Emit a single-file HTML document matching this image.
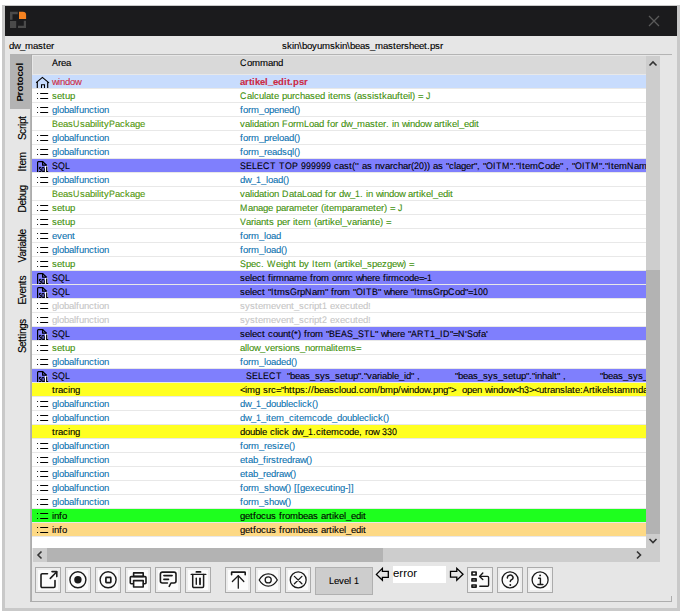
<!DOCTYPE html>
<html><head><meta charset="utf-8">
<style>
html,body{margin:0;padding:0;}
body{width:683px;height:614px;background:#fff;position:relative;overflow:hidden;font-family:"Liberation Sans",sans-serif;font-size:9.6px;}
div,svg{position:absolute;}
.frame{left:2px;top:5px;width:678px;height:606px;background:#c9c9c9;}
.hdr{left:5px;top:6px;width:672px;height:30px;background:#1b1b1d;}
.bd{left:5px;top:36px;width:672px;height:572px;background:#e6e6e6;}
.ttl{top:40px;white-space:nowrap;color:#000;line-height:12px;-webkit-text-stroke:0.12px #000;}
.tabbg{left:10px;top:54px;width:22px;height:55px;background:#b3b3b3;}
.vline{left:30px;top:54px;width:2px;height:548px;background:#b4b4b4;}
.vline2{left:31px;top:54px;width:1px;height:548px;background:#acacac;}
.hline{left:10px;top:54px;width:662px;height:1px;background:#b4b4b4;}
.bline{left:30px;top:601px;width:642px;height:1px;background:#adadad;}
.rtick{left:671px;top:596px;width:1px;height:6px;background:#adadad;}
.tbl{left:32px;top:55px;width:614px;height:493px;background:#fff;overflow:hidden;}
.thl{left:32px;top:55px;width:614px;height:20px;background:#e8e8e8;}
.th{left:33px;top:56px;width:613px;height:18px;background:#d9d9d9;}
.thx{top:57px;color:#000;white-space:nowrap;line-height:11px;-webkit-text-stroke:0.12px #000;}
.rows{left:0;top:0;width:646px;height:548px;overflow:hidden;}
.rbg{left:32px;width:614px;height:13px;}
.rsep{left:32px;width:614px;height:1px;background:#e8e8e8;}
.tx{white-space:nowrap;line-height:13px;height:13px;font-size:9.5px;-webkit-text-stroke:0.1px currentColor;}
i{display:inline-block;font-style:normal;}
.tx i.u,.thx i.u,.lvl i.u{text-rendering:geometricPrecision;transform:scaleX(0.93);transform-origin:0 0;}
.ic{left:33px;}
.vs{left:646px;top:56px;width:14px;height:492px;background:#cdcdcd;}
.vthumb{left:646px;top:270px;width:14px;height:264px;background:#b3b3b3;}
.hs{left:33px;top:548px;width:627px;height:14px;background:#cdcdcd;}
.hthumb{left:47px;top:548px;width:336px;height:14px;background:#b3b3b3;}
.tab{left:19px;width:0;height:0;}
.tabt{left:0;top:0;white-space:nowrap;line-height:11px;transform:translate(-50%,-50%) rotate(-90deg);color:#000;font-size:10.2px;-webkit-text-stroke:0.15px #000;}
.btn{border:1px solid #ababab;background:#fcfcfc;box-shadow:inset 0 0 0 2px #ededed;}
.btn svg{left:0;top:0;}
.lvl{left:315px;top:567px;width:56px;height:26px;border:1px solid #b0b0b0;background:#cdcdcd;text-align:center;line-height:26px;color:#000;-webkit-text-stroke:0.12px #000;}
.inp{left:393px;top:566px;width:53px;height:17px;background:#fff;}
.err{left:393px;top:566px;font-size:11.4px;line-height:14px;color:#000;}
</style></head><body>
<div class="frame"></div>
<div class="hdr"></div>
<div class="bd"></div>
<svg style="left:9px;top:11px" width="18" height="18" viewBox="0 0 18 18">
<path d="M1 0.8H8.8V3.3H3.5V8.8H1Z" fill="#4a4a4a"/>
<path d="M10 0.8H13.8Q17.1 0.8 17.1 4.1V7.9H10Z" fill="#f58220"/>
<rect x="1" y="10" width="6.2" height="7" fill="#4a4a4a"/>
<path d="M14.8 9.8H17V17H9V14.8H14.8Z" fill="#4a4a4a"/>
</svg>
<svg style="left:647px;top:14px" width="14" height="14" viewBox="0 0 14 14"><path d="M2 2L12 12M12 2L2 12" stroke="#5a5a5a" stroke-width="1.3"/></svg>
<div class="ttl" style="left:9px"><i style="width:5px">d</i><i style="width:6px">w</i><i style="width:5px">_</i><i style="width:8px">m</i><i style="width:5px">a</i><i style="width:5px">s</i><i style="width:3px">t</i><i style="width:5px">e</i><i style="width:3px">r</i></div>
<div class="ttl" style="left:282px"><i style="width:5px">s</i><i style="width:5px">k</i><i style="width:2px">i</i><i style="width:5px">n</i><i style="width:3px">\</i><i style="width:5px">b</i><i style="width:5px">o</i><i style="width:5px">y</i><i style="width:5px">u</i><i style="width:8px">m</i><i style="width:5px">s</i><i style="width:5px">k</i><i style="width:2px">i</i><i style="width:5px">n</i><i style="width:3px">\</i><i style="width:5px">b</i><i style="width:5px">e</i><i style="width:5px">a</i><i style="width:5px">s</i><i style="width:5px">_</i><i style="width:8px">m</i><i style="width:5px">a</i><i style="width:5px">s</i><i style="width:3px">t</i><i style="width:5px">e</i><i style="width:3px">r</i><i style="width:5px">s</i><i style="width:5px">h</i><i style="width:5px">e</i><i style="width:5px">e</i><i style="width:3px">t</i><i style="width:3px">.</i><i style="width:5px">p</i><i style="width:5px">s</i><i style="width:3px">r</i></div>
<div class="hline"></div>
<div class="tabbg"></div>
<div class="vline"></div><div class="vline2"></div>
<div class="bline"></div>
<div class="rtick"></div>
<div class="tbl"></div>
<div class="thl"></div><div class="th"></div>
<div class="thx" style="left:52px"><i class="u" style="width:6px">A</i><i style="width:3px">r</i><i style="width:5px">e</i><i style="width:5px">a</i></div>
<div class="thx" style="left:240px"><i class="u" style="width:7px">C</i><i style="width:5px">o</i><i style="width:8px">m</i><i style="width:8px">m</i><i style="width:5px">a</i><i style="width:5px">n</i><i style="width:5px">d</i></div>
<div class="rows">
<div class="rbg" style="top:75px;background:#c8dcfd"></div>
<div class="rsep" style="top:88px"></div>
<svg class="ic" style="top:75px" width="18" height="13"><g fill="none" stroke="#000" stroke-width="1.15" stroke-linecap="round" stroke-linejoin="miter"><path d="M3.5 7.4 L9.4 2.4 L15.7 7.6"/><path d="M4.3 7.2V13.5M14.7 7.6V13.5"/><path d="M8.5 13.5V9.8H11.5V13.5" stroke-width="1.05"/></g></svg>
<div class="tx" style="top:75px;left:52px;color:#cc2a44"><i style="width:6px">w</i><i style="width:2px">i</i><i style="width:5px">n</i><i style="width:5px">d</i><i style="width:5px">o</i><i style="width:6px">w</i></div>
<div class="tx" style="top:75px;left:240px;color:#cc2a44;font-weight:bold;"><i style="width:5px">a</i><i style="width:4px">r</i><i style="width:3px">t</i><i style="width:3px">i</i><i style="width:5px">k</i><i style="width:5px">e</i><i style="width:3px">l</i><i style="width:5px">_</i><i style="width:5px">e</i><i style="width:6px">d</i><i style="width:3px">i</i><i style="width:3px">t</i><i style="width:3px">.</i><i style="width:6px">p</i><i style="width:5px">s</i><i style="width:4px">r</i></div>
<div class="rsep" style="top:102px"></div>
<svg class="ic" style="top:89px" width="18" height="13"><g stroke="#000" stroke-width="1.15" stroke-linecap="round"><path d="M4.5 4.5h.05M4.5 9.5h.05M7.6 4.5h7.1M7.6 9.5h7.1"/></g></svg>
<div class="tx" style="top:89px;left:52px;color:#3f900c"><i style="width:5px">s</i><i style="width:5px">e</i><i style="width:3px">t</i><i style="width:5px">u</i><i style="width:5px">p</i></div>
<div class="tx" style="top:89px;left:240px;color:#3f900c;"><i class="u" style="width:7px">C</i><i style="width:5px">a</i><i style="width:2px">l</i><i style="width:5px">c</i><i style="width:5px">u</i><i style="width:2px">l</i><i style="width:5px">a</i><i style="width:3px">t</i><i style="width:5px">e</i><i style="width:3px"></i><i style="width:5px">p</i><i style="width:5px">u</i><i style="width:3px">r</i><i style="width:5px">c</i><i style="width:5px">h</i><i style="width:5px">a</i><i style="width:5px">s</i><i style="width:5px">e</i><i style="width:5px">d</i><i style="width:3px"></i><i style="width:2px">i</i><i style="width:3px">t</i><i style="width:5px">e</i><i style="width:8px">m</i><i style="width:5px">s</i><i style="width:3px"></i><i style="width:3px">(</i><i style="width:5px">a</i><i style="width:5px">s</i><i style="width:5px">s</i><i style="width:2px">i</i><i style="width:5px">s</i><i style="width:3px">t</i><i style="width:5px">k</i><i style="width:5px">a</i><i style="width:5px">u</i><i style="width:3px">f</i><i style="width:3px">t</i><i style="width:5px">e</i><i style="width:2px">i</i><i style="width:2px">l</i><i style="width:3px">)</i><i style="width:3px"></i><i style="width:5px">=</i><i style="width:3px"></i><i class="u" style="width:5px">J</i></div>
<div class="rsep" style="top:116px"></div>
<svg class="ic" style="top:103px" width="18" height="13"><g stroke="#000" stroke-width="1.15" stroke-linecap="round"><path d="M4.5 4.5h.05M4.5 9.5h.05M7.6 4.5h7.1M7.6 9.5h7.1"/></g></svg>
<div class="tx" style="top:103px;left:52px;color:#0c72b0"><i style="width:5px">g</i><i style="width:2px">l</i><i style="width:5px">o</i><i style="width:5px">b</i><i style="width:5px">a</i><i style="width:2px">l</i><i style="width:3px">f</i><i style="width:5px">u</i><i style="width:5px">n</i><i style="width:5px">c</i><i style="width:3px">t</i><i style="width:2px">i</i><i style="width:5px">o</i><i style="width:5px">n</i></div>
<div class="tx" style="top:103px;left:240px;color:#0c72b0;"><i style="width:3px">f</i><i style="width:5px">o</i><i style="width:3px">r</i><i style="width:8px">m</i><i style="width:5px">_</i><i style="width:5px">o</i><i style="width:5px">p</i><i style="width:5px">e</i><i style="width:5px">n</i><i style="width:5px">e</i><i style="width:5px">d</i><i style="width:3px">(</i><i style="width:3px">)</i></div>
<div class="rsep" style="top:130px"></div>
<div class="tx" style="top:117px;left:52px;color:#52960a"><i class="u" style="width:6px">B</i><i style="width:5px">e</i><i style="width:5px">a</i><i style="width:5px">s</i><i class="u" style="width:7px">U</i><i style="width:5px">s</i><i style="width:5px">a</i><i style="width:5px">b</i><i style="width:2px">i</i><i style="width:2px">l</i><i style="width:2px">i</i><i style="width:3px">t</i><i style="width:5px">y</i><i class="u" style="width:6px">P</i><i style="width:5px">a</i><i style="width:5px">c</i><i style="width:5px">k</i><i style="width:5px">a</i><i style="width:5px">g</i><i style="width:5px">e</i></div>
<div class="tx" style="top:117px;left:240px;color:#3f900c;"><i style="width:5px">v</i><i style="width:5px">a</i><i style="width:2px">l</i><i style="width:2px">i</i><i style="width:5px">d</i><i style="width:5px">a</i><i style="width:3px">t</i><i style="width:2px">i</i><i style="width:5px">o</i><i style="width:5px">n</i><i style="width:3px"></i><i class="u" style="width:6px">F</i><i style="width:5px">o</i><i style="width:3px">r</i><i style="width:8px">m</i><i class="u" style="width:5px">L</i><i style="width:5px">o</i><i style="width:5px">a</i><i style="width:5px">d</i><i style="width:3px"></i><i style="width:3px">f</i><i style="width:5px">o</i><i style="width:3px">r</i><i style="width:3px"></i><i style="width:5px">d</i><i style="width:6px">w</i><i style="width:5px">_</i><i style="width:8px">m</i><i style="width:5px">a</i><i style="width:5px">s</i><i style="width:3px">t</i><i style="width:5px">e</i><i style="width:3px">r</i><i style="width:3px">.</i><i style="width:3px"></i><i style="width:2px">i</i><i style="width:5px">n</i><i style="width:3px"></i><i style="width:6px">w</i><i style="width:2px">i</i><i style="width:5px">n</i><i style="width:5px">d</i><i style="width:5px">o</i><i style="width:6px">w</i><i style="width:3px"></i><i style="width:5px">a</i><i style="width:3px">r</i><i style="width:3px">t</i><i style="width:2px">i</i><i style="width:5px">k</i><i style="width:5px">e</i><i style="width:2px">l</i><i style="width:5px">_</i><i style="width:5px">e</i><i style="width:5px">d</i><i style="width:2px">i</i><i style="width:3px">t</i></div>
<div class="rsep" style="top:144px"></div>
<svg class="ic" style="top:131px" width="18" height="13"><g stroke="#000" stroke-width="1.15" stroke-linecap="round"><path d="M4.5 4.5h.05M4.5 9.5h.05M7.6 4.5h7.1M7.6 9.5h7.1"/></g></svg>
<div class="tx" style="top:131px;left:52px;color:#0c72b0"><i style="width:5px">g</i><i style="width:2px">l</i><i style="width:5px">o</i><i style="width:5px">b</i><i style="width:5px">a</i><i style="width:2px">l</i><i style="width:3px">f</i><i style="width:5px">u</i><i style="width:5px">n</i><i style="width:5px">c</i><i style="width:3px">t</i><i style="width:2px">i</i><i style="width:5px">o</i><i style="width:5px">n</i></div>
<div class="tx" style="top:131px;left:240px;color:#0c72b0;"><i style="width:3px">f</i><i style="width:5px">o</i><i style="width:3px">r</i><i style="width:8px">m</i><i style="width:5px">_</i><i style="width:5px">p</i><i style="width:3px">r</i><i style="width:5px">e</i><i style="width:2px">l</i><i style="width:5px">o</i><i style="width:5px">a</i><i style="width:5px">d</i><i style="width:3px">(</i><i style="width:3px">)</i></div>
<div class="rsep" style="top:158px"></div>
<svg class="ic" style="top:145px" width="18" height="13"><g stroke="#000" stroke-width="1.15" stroke-linecap="round"><path d="M4.5 4.5h.05M4.5 9.5h.05M7.6 4.5h7.1M7.6 9.5h7.1"/></g></svg>
<div class="tx" style="top:145px;left:52px;color:#0c72b0"><i style="width:5px">g</i><i style="width:2px">l</i><i style="width:5px">o</i><i style="width:5px">b</i><i style="width:5px">a</i><i style="width:2px">l</i><i style="width:3px">f</i><i style="width:5px">u</i><i style="width:5px">n</i><i style="width:5px">c</i><i style="width:3px">t</i><i style="width:2px">i</i><i style="width:5px">o</i><i style="width:5px">n</i></div>
<div class="tx" style="top:145px;left:240px;color:#0c72b0;"><i style="width:3px">f</i><i style="width:5px">o</i><i style="width:3px">r</i><i style="width:8px">m</i><i style="width:5px">_</i><i style="width:3px">r</i><i style="width:5px">e</i><i style="width:5px">a</i><i style="width:5px">d</i><i style="width:5px">s</i><i style="width:5px">q</i><i style="width:2px">l</i><i style="width:3px">(</i><i style="width:3px">)</i></div>
<div class="rbg" style="top:159px;background:#7f7ffd"></div>
<div class="rsep" style="top:172px"></div>
<svg class="ic" style="top:159px" width="18" height="13"><rect x="12" y="7" width="2.6" height="6" fill="#fff"/><g fill="none" stroke="#000" stroke-width="1.2"><path d="M4.6 13.5V3.4Q4.6 2.6 5.4 2.6H9.7L13.5 6.3"/><path d="M9.6 2.6V6.1H13.6"/><path d="M8.1 8.6C7.6 8.0 6.4 8.1 6.4 9.2C6.4 10.3 8.2 10.1 8.2 11.4C8.2 12.8 6.6 12.7 6.1 12.1" stroke-width="1.1"/><ellipse cx="10.1" cy="10.4" rx="1.25" ry="2.1" stroke-width="1.1"/><path d="M10.6 11.8L11.7 13" stroke-width="1.1"/><path d="M13.7 7.4V12.5H15.2" stroke-width="1.2"/></g></svg>
<div class="tx" style="top:159px;left:52px;color:#000000"><i class="u" style="width:6px">S</i><i class="u" style="width:7px">Q</i><i class="u" style="width:5px">L</i></div>
<div class="tx" style="top:159px;left:240px;color:#000000;"><i class="u" style="width:6px">S</i><i class="u" style="width:6px">E</i><i class="u" style="width:5px">L</i><i class="u" style="width:6px">E</i><i class="u" style="width:7px">C</i><i class="u" style="width:6px">T</i><i style="width:3px"></i><i class="u" style="width:6px">T</i><i class="u" style="width:7px">O</i><i class="u" style="width:6px">P</i><i style="width:3px"></i><i class="u" style="width:5px">9</i><i class="u" style="width:5px">9</i><i class="u" style="width:5px">9</i><i class="u" style="width:5px">9</i><i class="u" style="width:5px">9</i><i class="u" style="width:5px">9</i><i style="width:3px"></i><i style="width:5px">c</i><i style="width:5px">a</i><i style="width:5px">s</i><i style="width:3px">t</i><i style="width:3px">(</i><i style="width:2px">&#x27;</i><i style="width:2px">&#x27;</i><i style="width:3px"></i><i style="width:5px">a</i><i style="width:5px">s</i><i style="width:3px"></i><i style="width:5px">n</i><i style="width:5px">v</i><i style="width:5px">a</i><i style="width:3px">r</i><i style="width:5px">c</i><i style="width:5px">h</i><i style="width:5px">a</i><i style="width:3px">r</i><i style="width:3px">(</i><i class="u" style="width:5px">2</i><i class="u" style="width:5px">0</i><i style="width:3px">)</i><i style="width:3px">)</i><i style="width:3px"></i><i style="width:5px">a</i><i style="width:5px">s</i><i style="width:3px"></i><i style="width:3px">&quot;</i><i style="width:5px">c</i><i style="width:2px">l</i><i style="width:5px">a</i><i style="width:5px">g</i><i style="width:5px">e</i><i style="width:3px">r</i><i style="width:3px">&quot;</i><i style="width:3px">,</i><i style="width:3px"></i><i style="width:3px">&quot;</i><i class="u" style="width:7px">O</i><i class="u" style="width:3px">I</i><i class="u" style="width:6px">T</i><i class="u" style="width:8px">M</i><i style="width:3px">&quot;</i><i style="width:3px">.</i><i style="width:3px">&quot;</i><i class="u" style="width:3px">I</i><i style="width:3px">t</i><i style="width:5px">e</i><i style="width:8px">m</i><i class="u" style="width:7px">C</i><i style="width:5px">o</i><i style="width:5px">d</i><i style="width:5px">e</i><i style="width:3px">&quot;</i><i style="width:3px"></i><i style="width:3px">,</i><i style="width:3px"></i><i style="width:3px">&quot;</i><i class="u" style="width:7px">O</i><i class="u" style="width:3px">I</i><i class="u" style="width:6px">T</i><i class="u" style="width:8px">M</i><i style="width:3px">&quot;</i><i style="width:3px">.</i><i style="width:3px">&quot;</i><i class="u" style="width:3px">I</i><i style="width:3px">t</i><i style="width:5px">e</i><i style="width:8px">m</i><i class="u" style="width:7px">N</i><i style="width:5px">a</i><i style="width:8px">m</i><i style="width:5px">e</i><i style="width:3px">&quot;</i></div>
<div class="rsep" style="top:186px"></div>
<svg class="ic" style="top:173px" width="18" height="13"><g stroke="#000" stroke-width="1.15" stroke-linecap="round"><path d="M4.5 4.5h.05M4.5 9.5h.05M7.6 4.5h7.1M7.6 9.5h7.1"/></g></svg>
<div class="tx" style="top:173px;left:52px;color:#0c72b0"><i style="width:5px">g</i><i style="width:2px">l</i><i style="width:5px">o</i><i style="width:5px">b</i><i style="width:5px">a</i><i style="width:2px">l</i><i style="width:3px">f</i><i style="width:5px">u</i><i style="width:5px">n</i><i style="width:5px">c</i><i style="width:3px">t</i><i style="width:2px">i</i><i style="width:5px">o</i><i style="width:5px">n</i></div>
<div class="tx" style="top:173px;left:240px;color:#0c72b0;"><i style="width:5px">d</i><i style="width:6px">w</i><i style="width:5px">_</i><i class="u" style="width:5px">1</i><i style="width:5px">_</i><i style="width:2px">l</i><i style="width:5px">o</i><i style="width:5px">a</i><i style="width:5px">d</i><i style="width:3px">(</i><i style="width:3px">)</i></div>
<div class="rsep" style="top:200px"></div>
<div class="tx" style="top:187px;left:52px;color:#52960a"><i class="u" style="width:6px">B</i><i style="width:5px">e</i><i style="width:5px">a</i><i style="width:5px">s</i><i class="u" style="width:7px">U</i><i style="width:5px">s</i><i style="width:5px">a</i><i style="width:5px">b</i><i style="width:2px">i</i><i style="width:2px">l</i><i style="width:2px">i</i><i style="width:3px">t</i><i style="width:5px">y</i><i class="u" style="width:6px">P</i><i style="width:5px">a</i><i style="width:5px">c</i><i style="width:5px">k</i><i style="width:5px">a</i><i style="width:5px">g</i><i style="width:5px">e</i></div>
<div class="tx" style="top:187px;left:240px;color:#3f900c;"><i style="width:5px">v</i><i style="width:5px">a</i><i style="width:2px">l</i><i style="width:2px">i</i><i style="width:5px">d</i><i style="width:5px">a</i><i style="width:3px">t</i><i style="width:2px">i</i><i style="width:5px">o</i><i style="width:5px">n</i><i style="width:3px"></i><i class="u" style="width:7px">D</i><i style="width:5px">a</i><i style="width:3px">t</i><i style="width:5px">a</i><i class="u" style="width:5px">L</i><i style="width:5px">o</i><i style="width:5px">a</i><i style="width:5px">d</i><i style="width:3px"></i><i style="width:3px">f</i><i style="width:5px">o</i><i style="width:3px">r</i><i style="width:3px"></i><i style="width:5px">d</i><i style="width:6px">w</i><i style="width:5px">_</i><i class="u" style="width:5px">1</i><i style="width:3px">.</i><i style="width:3px"></i><i style="width:2px">i</i><i style="width:5px">n</i><i style="width:3px"></i><i style="width:6px">w</i><i style="width:2px">i</i><i style="width:5px">n</i><i style="width:5px">d</i><i style="width:5px">o</i><i style="width:6px">w</i><i style="width:3px"></i><i style="width:5px">a</i><i style="width:3px">r</i><i style="width:3px">t</i><i style="width:2px">i</i><i style="width:5px">k</i><i style="width:5px">e</i><i style="width:2px">l</i><i style="width:5px">_</i><i style="width:5px">e</i><i style="width:5px">d</i><i style="width:2px">i</i><i style="width:3px">t</i></div>
<div class="rsep" style="top:214px"></div>
<svg class="ic" style="top:201px" width="18" height="13"><g stroke="#000" stroke-width="1.15" stroke-linecap="round"><path d="M4.5 4.5h.05M4.5 9.5h.05M7.6 4.5h7.1M7.6 9.5h7.1"/></g></svg>
<div class="tx" style="top:201px;left:52px;color:#3f900c"><i style="width:5px">s</i><i style="width:5px">e</i><i style="width:3px">t</i><i style="width:5px">u</i><i style="width:5px">p</i></div>
<div class="tx" style="top:201px;left:240px;color:#3f900c;"><i class="u" style="width:8px">M</i><i style="width:5px">a</i><i style="width:5px">n</i><i style="width:5px">a</i><i style="width:5px">g</i><i style="width:5px">e</i><i style="width:3px"></i><i style="width:5px">p</i><i style="width:5px">a</i><i style="width:3px">r</i><i style="width:5px">a</i><i style="width:8px">m</i><i style="width:5px">e</i><i style="width:3px">t</i><i style="width:5px">e</i><i style="width:3px">r</i><i style="width:3px"></i><i style="width:3px">(</i><i style="width:2px">i</i><i style="width:3px">t</i><i style="width:5px">e</i><i style="width:8px">m</i><i style="width:5px">p</i><i style="width:5px">a</i><i style="width:3px">r</i><i style="width:5px">a</i><i style="width:8px">m</i><i style="width:5px">e</i><i style="width:3px">t</i><i style="width:5px">e</i><i style="width:3px">r</i><i style="width:3px">)</i><i style="width:3px"></i><i style="width:5px">=</i><i style="width:3px"></i><i class="u" style="width:5px">J</i></div>
<div class="rsep" style="top:228px"></div>
<svg class="ic" style="top:215px" width="18" height="13"><g stroke="#000" stroke-width="1.15" stroke-linecap="round"><path d="M4.5 4.5h.05M4.5 9.5h.05M7.6 4.5h7.1M7.6 9.5h7.1"/></g></svg>
<div class="tx" style="top:215px;left:52px;color:#3f900c"><i style="width:5px">s</i><i style="width:5px">e</i><i style="width:3px">t</i><i style="width:5px">u</i><i style="width:5px">p</i></div>
<div class="tx" style="top:215px;left:240px;color:#3f900c;"><i class="u" style="width:6px">V</i><i style="width:5px">a</i><i style="width:3px">r</i><i style="width:2px">i</i><i style="width:5px">a</i><i style="width:5px">n</i><i style="width:3px">t</i><i style="width:5px">s</i><i style="width:3px"></i><i style="width:5px">p</i><i style="width:5px">e</i><i style="width:3px">r</i><i style="width:3px"></i><i style="width:2px">i</i><i style="width:3px">t</i><i style="width:5px">e</i><i style="width:8px">m</i><i style="width:3px"></i><i style="width:3px">(</i><i style="width:5px">a</i><i style="width:3px">r</i><i style="width:3px">t</i><i style="width:2px">i</i><i style="width:5px">k</i><i style="width:5px">e</i><i style="width:2px">l</i><i style="width:5px">_</i><i style="width:5px">v</i><i style="width:5px">a</i><i style="width:3px">r</i><i style="width:2px">i</i><i style="width:5px">a</i><i style="width:5px">n</i><i style="width:3px">t</i><i style="width:5px">e</i><i style="width:3px">)</i><i style="width:3px"></i><i style="width:5px">=</i></div>
<div class="rsep" style="top:242px"></div>
<svg class="ic" style="top:229px" width="18" height="13"><g stroke="#000" stroke-width="1.15" stroke-linecap="round"><path d="M4.5 4.5h.05M4.5 9.5h.05M7.6 4.5h7.1M7.6 9.5h7.1"/></g></svg>
<div class="tx" style="top:229px;left:52px;color:#0c72b0"><i style="width:5px">e</i><i style="width:5px">v</i><i style="width:5px">e</i><i style="width:5px">n</i><i style="width:3px">t</i></div>
<div class="tx" style="top:229px;left:240px;color:#0c72b0;"><i style="width:3px">f</i><i style="width:5px">o</i><i style="width:3px">r</i><i style="width:8px">m</i><i style="width:5px">_</i><i style="width:2px">l</i><i style="width:5px">o</i><i style="width:5px">a</i><i style="width:5px">d</i></div>
<div class="rsep" style="top:256px"></div>
<svg class="ic" style="top:243px" width="18" height="13"><g stroke="#000" stroke-width="1.15" stroke-linecap="round"><path d="M4.5 4.5h.05M4.5 9.5h.05M7.6 4.5h7.1M7.6 9.5h7.1"/></g></svg>
<div class="tx" style="top:243px;left:52px;color:#0c72b0"><i style="width:5px">g</i><i style="width:2px">l</i><i style="width:5px">o</i><i style="width:5px">b</i><i style="width:5px">a</i><i style="width:2px">l</i><i style="width:3px">f</i><i style="width:5px">u</i><i style="width:5px">n</i><i style="width:5px">c</i><i style="width:3px">t</i><i style="width:2px">i</i><i style="width:5px">o</i><i style="width:5px">n</i></div>
<div class="tx" style="top:243px;left:240px;color:#0c72b0;"><i style="width:3px">f</i><i style="width:5px">o</i><i style="width:3px">r</i><i style="width:8px">m</i><i style="width:5px">_</i><i style="width:2px">l</i><i style="width:5px">o</i><i style="width:5px">a</i><i style="width:5px">d</i><i style="width:3px">(</i><i style="width:3px">)</i></div>
<div class="rsep" style="top:270px"></div>
<svg class="ic" style="top:257px" width="18" height="13"><g stroke="#000" stroke-width="1.15" stroke-linecap="round"><path d="M4.5 4.5h.05M4.5 9.5h.05M7.6 4.5h7.1M7.6 9.5h7.1"/></g></svg>
<div class="tx" style="top:257px;left:52px;color:#3f900c"><i style="width:5px">s</i><i style="width:5px">e</i><i style="width:3px">t</i><i style="width:5px">u</i><i style="width:5px">p</i></div>
<div class="tx" style="top:257px;left:240px;color:#3f900c;"><i class="u" style="width:6px">S</i><i style="width:5px">p</i><i style="width:5px">e</i><i style="width:5px">c</i><i style="width:3px">.</i><i style="width:3px"></i><i class="u" style="width:9px">W</i><i style="width:5px">e</i><i style="width:2px">i</i><i style="width:5px">g</i><i style="width:5px">h</i><i style="width:3px">t</i><i style="width:3px"></i><i style="width:5px">b</i><i style="width:5px">y</i><i style="width:3px"></i><i class="u" style="width:3px">I</i><i style="width:3px">t</i><i style="width:5px">e</i><i style="width:8px">m</i><i style="width:3px"></i><i style="width:3px">(</i><i style="width:5px">a</i><i style="width:3px">r</i><i style="width:3px">t</i><i style="width:2px">i</i><i style="width:5px">k</i><i style="width:5px">e</i><i style="width:2px">l</i><i style="width:5px">_</i><i style="width:5px">s</i><i style="width:5px">p</i><i style="width:5px">e</i><i style="width:5px">z</i><i style="width:5px">g</i><i style="width:5px">e</i><i style="width:6px">w</i><i style="width:3px">)</i><i style="width:3px"></i><i style="width:5px">=</i></div>
<div class="rbg" style="top:271px;background:#7f7ffd"></div>
<div class="rsep" style="top:284px"></div>
<svg class="ic" style="top:271px" width="18" height="13"><rect x="12" y="7" width="2.6" height="6" fill="#fff"/><g fill="none" stroke="#000" stroke-width="1.2"><path d="M4.6 13.5V3.4Q4.6 2.6 5.4 2.6H9.7L13.5 6.3"/><path d="M9.6 2.6V6.1H13.6"/><path d="M8.1 8.6C7.6 8.0 6.4 8.1 6.4 9.2C6.4 10.3 8.2 10.1 8.2 11.4C8.2 12.8 6.6 12.7 6.1 12.1" stroke-width="1.1"/><ellipse cx="10.1" cy="10.4" rx="1.25" ry="2.1" stroke-width="1.1"/><path d="M10.6 11.8L11.7 13" stroke-width="1.1"/><path d="M13.7 7.4V12.5H15.2" stroke-width="1.2"/></g></svg>
<div class="tx" style="top:271px;left:52px;color:#000000"><i class="u" style="width:6px">S</i><i class="u" style="width:7px">Q</i><i class="u" style="width:5px">L</i></div>
<div class="tx" style="top:271px;left:240px;color:#000000;"><i style="width:5px">s</i><i style="width:5px">e</i><i style="width:2px">l</i><i style="width:5px">e</i><i style="width:5px">c</i><i style="width:3px">t</i><i style="width:3px"></i><i style="width:3px">f</i><i style="width:2px">i</i><i style="width:3px">r</i><i style="width:8px">m</i><i style="width:5px">n</i><i style="width:5px">a</i><i style="width:8px">m</i><i style="width:5px">e</i><i style="width:3px"></i><i style="width:3px">f</i><i style="width:3px">r</i><i style="width:5px">o</i><i style="width:8px">m</i><i style="width:3px"></i><i style="width:5px">o</i><i style="width:8px">m</i><i style="width:3px">r</i><i style="width:5px">c</i><i style="width:3px"></i><i style="width:6px">w</i><i style="width:5px">h</i><i style="width:5px">e</i><i style="width:3px">r</i><i style="width:5px">e</i><i style="width:3px"></i><i style="width:3px">f</i><i style="width:2px">i</i><i style="width:3px">r</i><i style="width:8px">m</i><i style="width:5px">c</i><i style="width:5px">o</i><i style="width:5px">d</i><i style="width:5px">e</i><i style="width:5px">=</i><i style="width:3px">-</i><i class="u" style="width:5px">1</i></div>
<div class="rbg" style="top:285px;background:#7f7ffd"></div>
<div class="rsep" style="top:298px"></div>
<svg class="ic" style="top:285px" width="18" height="13"><rect x="12" y="7" width="2.6" height="6" fill="#fff"/><g fill="none" stroke="#000" stroke-width="1.2"><path d="M4.6 13.5V3.4Q4.6 2.6 5.4 2.6H9.7L13.5 6.3"/><path d="M9.6 2.6V6.1H13.6"/><path d="M8.1 8.6C7.6 8.0 6.4 8.1 6.4 9.2C6.4 10.3 8.2 10.1 8.2 11.4C8.2 12.8 6.6 12.7 6.1 12.1" stroke-width="1.1"/><ellipse cx="10.1" cy="10.4" rx="1.25" ry="2.1" stroke-width="1.1"/><path d="M10.6 11.8L11.7 13" stroke-width="1.1"/><path d="M13.7 7.4V12.5H15.2" stroke-width="1.2"/></g></svg>
<div class="tx" style="top:285px;left:52px;color:#000000"><i class="u" style="width:6px">S</i><i class="u" style="width:7px">Q</i><i class="u" style="width:5px">L</i></div>
<div class="tx" style="top:285px;left:240px;color:#000000;"><i style="width:5px">s</i><i style="width:5px">e</i><i style="width:2px">l</i><i style="width:5px">e</i><i style="width:5px">c</i><i style="width:3px">t</i><i style="width:3px"></i><i style="width:3px">&quot;</i><i class="u" style="width:3px">I</i><i style="width:3px">t</i><i style="width:8px">m</i><i style="width:5px">s</i><i class="u" style="width:7px">G</i><i style="width:3px">r</i><i style="width:5px">p</i><i class="u" style="width:7px">N</i><i style="width:5px">a</i><i style="width:8px">m</i><i style="width:3px">&quot;</i><i style="width:3px"></i><i style="width:3px">f</i><i style="width:3px">r</i><i style="width:5px">o</i><i style="width:8px">m</i><i style="width:3px"></i><i style="width:3px">&quot;</i><i class="u" style="width:7px">O</i><i class="u" style="width:3px">I</i><i class="u" style="width:6px">T</i><i class="u" style="width:6px">B</i><i style="width:3px">&quot;</i><i style="width:3px"></i><i style="width:6px">w</i><i style="width:5px">h</i><i style="width:5px">e</i><i style="width:3px">r</i><i style="width:5px">e</i><i style="width:3px"></i><i style="width:3px">&quot;</i><i class="u" style="width:3px">I</i><i style="width:3px">t</i><i style="width:8px">m</i><i style="width:5px">s</i><i class="u" style="width:7px">G</i><i style="width:3px">r</i><i style="width:5px">p</i><i class="u" style="width:7px">C</i><i style="width:5px">o</i><i style="width:5px">d</i><i style="width:3px">&quot;</i><i style="width:5px">=</i><i class="u" style="width:5px">1</i><i class="u" style="width:5px">0</i><i class="u" style="width:5px">0</i></div>
<div class="rsep" style="top:312px"></div>
<svg class="ic" style="top:299px" width="18" height="13"><g stroke="#000" stroke-width="1.15" stroke-linecap="round"><path d="M4.5 4.5h.05M4.5 9.5h.05M7.6 4.5h7.1M7.6 9.5h7.1"/></g></svg>
<div class="tx" style="top:299px;left:52px;color:#c6c6c6"><i style="width:5px">g</i><i style="width:2px">l</i><i style="width:5px">o</i><i style="width:5px">b</i><i style="width:5px">a</i><i style="width:2px">l</i><i style="width:3px">f</i><i style="width:5px">u</i><i style="width:5px">n</i><i style="width:5px">c</i><i style="width:3px">t</i><i style="width:2px">i</i><i style="width:5px">o</i><i style="width:5px">n</i></div>
<div class="tx" style="top:299px;left:240px;color:#c6c6c6;"><i style="width:5px">s</i><i style="width:5px">y</i><i style="width:5px">s</i><i style="width:3px">t</i><i style="width:5px">e</i><i style="width:8px">m</i><i style="width:5px">e</i><i style="width:5px">v</i><i style="width:5px">e</i><i style="width:5px">n</i><i style="width:3px">t</i><i style="width:5px">_</i><i style="width:5px">s</i><i style="width:5px">c</i><i style="width:3px">r</i><i style="width:2px">i</i><i style="width:5px">p</i><i style="width:3px">t</i><i class="u" style="width:5px">1</i><i style="width:3px"></i><i style="width:5px">e</i><i style="width:5px">x</i><i style="width:5px">e</i><i style="width:5px">c</i><i style="width:5px">u</i><i style="width:3px">t</i><i style="width:5px">e</i><i style="width:5px">d</i><i style="width:3px">!</i></div>
<div class="rsep" style="top:326px"></div>
<svg class="ic" style="top:313px" width="18" height="13"><g stroke="#000" stroke-width="1.15" stroke-linecap="round"><path d="M4.5 4.5h.05M4.5 9.5h.05M7.6 4.5h7.1M7.6 9.5h7.1"/></g></svg>
<div class="tx" style="top:313px;left:52px;color:#c6c6c6"><i style="width:5px">g</i><i style="width:2px">l</i><i style="width:5px">o</i><i style="width:5px">b</i><i style="width:5px">a</i><i style="width:2px">l</i><i style="width:3px">f</i><i style="width:5px">u</i><i style="width:5px">n</i><i style="width:5px">c</i><i style="width:3px">t</i><i style="width:2px">i</i><i style="width:5px">o</i><i style="width:5px">n</i></div>
<div class="tx" style="top:313px;left:240px;color:#c6c6c6;"><i style="width:5px">s</i><i style="width:5px">y</i><i style="width:5px">s</i><i style="width:3px">t</i><i style="width:5px">e</i><i style="width:8px">m</i><i style="width:5px">e</i><i style="width:5px">v</i><i style="width:5px">e</i><i style="width:5px">n</i><i style="width:3px">t</i><i style="width:5px">_</i><i style="width:5px">s</i><i style="width:5px">c</i><i style="width:3px">r</i><i style="width:2px">i</i><i style="width:5px">p</i><i style="width:3px">t</i><i class="u" style="width:5px">2</i><i style="width:3px"></i><i style="width:5px">e</i><i style="width:5px">x</i><i style="width:5px">e</i><i style="width:5px">c</i><i style="width:5px">u</i><i style="width:3px">t</i><i style="width:5px">e</i><i style="width:5px">d</i><i style="width:3px">!</i></div>
<div class="rbg" style="top:327px;background:#7f7ffd"></div>
<div class="rsep" style="top:340px"></div>
<svg class="ic" style="top:327px" width="18" height="13"><rect x="12" y="7" width="2.6" height="6" fill="#fff"/><g fill="none" stroke="#000" stroke-width="1.2"><path d="M4.6 13.5V3.4Q4.6 2.6 5.4 2.6H9.7L13.5 6.3"/><path d="M9.6 2.6V6.1H13.6"/><path d="M8.1 8.6C7.6 8.0 6.4 8.1 6.4 9.2C6.4 10.3 8.2 10.1 8.2 11.4C8.2 12.8 6.6 12.7 6.1 12.1" stroke-width="1.1"/><ellipse cx="10.1" cy="10.4" rx="1.25" ry="2.1" stroke-width="1.1"/><path d="M10.6 11.8L11.7 13" stroke-width="1.1"/><path d="M13.7 7.4V12.5H15.2" stroke-width="1.2"/></g></svg>
<div class="tx" style="top:327px;left:52px;color:#000000"><i class="u" style="width:6px">S</i><i class="u" style="width:7px">Q</i><i class="u" style="width:5px">L</i></div>
<div class="tx" style="top:327px;left:240px;color:#000000;"><i style="width:5px">s</i><i style="width:5px">e</i><i style="width:2px">l</i><i style="width:5px">e</i><i style="width:5px">c</i><i style="width:3px">t</i><i style="width:3px"></i><i style="width:5px">c</i><i style="width:5px">o</i><i style="width:5px">u</i><i style="width:5px">n</i><i style="width:3px">t</i><i style="width:3px">(</i><i style="width:4px">*</i><i style="width:3px">)</i><i style="width:3px"></i><i style="width:3px">f</i><i style="width:3px">r</i><i style="width:5px">o</i><i style="width:8px">m</i><i style="width:3px"></i><i style="width:3px">&quot;</i><i class="u" style="width:6px">B</i><i class="u" style="width:6px">E</i><i class="u" style="width:6px">A</i><i class="u" style="width:6px">S</i><i style="width:5px">_</i><i class="u" style="width:6px">S</i><i class="u" style="width:6px">T</i><i class="u" style="width:5px">L</i><i style="width:3px">&quot;</i><i style="width:3px"></i><i style="width:6px">w</i><i style="width:5px">h</i><i style="width:5px">e</i><i style="width:3px">r</i><i style="width:5px">e</i><i style="width:3px"></i><i style="width:3px">&quot;</i><i class="u" style="width:6px">A</i><i class="u" style="width:7px">R</i><i class="u" style="width:6px">T</i><i class="u" style="width:5px">1</i><i style="width:5px">_</i><i class="u" style="width:3px">I</i><i class="u" style="width:7px">D</i><i style="width:3px">&quot;</i><i style="width:5px">=</i><i class="u" style="width:7px">N</i><i style="width:2px">&#x27;</i><i class="u" style="width:6px">S</i><i style="width:5px">o</i><i style="width:3px">f</i><i style="width:5px">a</i><i style="width:2px">&#x27;</i></div>
<div class="rsep" style="top:354px"></div>
<svg class="ic" style="top:341px" width="18" height="13"><g stroke="#000" stroke-width="1.15" stroke-linecap="round"><path d="M4.5 4.5h.05M4.5 9.5h.05M7.6 4.5h7.1M7.6 9.5h7.1"/></g></svg>
<div class="tx" style="top:341px;left:52px;color:#3f900c"><i style="width:5px">s</i><i style="width:5px">e</i><i style="width:3px">t</i><i style="width:5px">u</i><i style="width:5px">p</i></div>
<div class="tx" style="top:341px;left:240px;color:#3f900c;"><i style="width:5px">a</i><i style="width:2px">l</i><i style="width:2px">l</i><i style="width:5px">o</i><i style="width:6px">w</i><i style="width:5px">_</i><i style="width:5px">v</i><i style="width:5px">e</i><i style="width:3px">r</i><i style="width:5px">s</i><i style="width:2px">i</i><i style="width:5px">o</i><i style="width:5px">n</i><i style="width:5px">s</i><i style="width:5px">_</i><i style="width:5px">n</i><i style="width:5px">o</i><i style="width:3px">r</i><i style="width:8px">m</i><i style="width:5px">a</i><i style="width:2px">l</i><i style="width:2px">i</i><i style="width:3px">t</i><i style="width:5px">e</i><i style="width:8px">m</i><i style="width:5px">s</i><i style="width:5px">=</i></div>
<div class="rsep" style="top:368px"></div>
<svg class="ic" style="top:355px" width="18" height="13"><g stroke="#000" stroke-width="1.15" stroke-linecap="round"><path d="M4.5 4.5h.05M4.5 9.5h.05M7.6 4.5h7.1M7.6 9.5h7.1"/></g></svg>
<div class="tx" style="top:355px;left:52px;color:#0c72b0"><i style="width:5px">g</i><i style="width:2px">l</i><i style="width:5px">o</i><i style="width:5px">b</i><i style="width:5px">a</i><i style="width:2px">l</i><i style="width:3px">f</i><i style="width:5px">u</i><i style="width:5px">n</i><i style="width:5px">c</i><i style="width:3px">t</i><i style="width:2px">i</i><i style="width:5px">o</i><i style="width:5px">n</i></div>
<div class="tx" style="top:355px;left:240px;color:#0c72b0;"><i style="width:3px">f</i><i style="width:5px">o</i><i style="width:3px">r</i><i style="width:8px">m</i><i style="width:5px">_</i><i style="width:2px">l</i><i style="width:5px">o</i><i style="width:5px">a</i><i style="width:5px">d</i><i style="width:5px">e</i><i style="width:5px">d</i><i style="width:3px">(</i><i style="width:3px">)</i></div>
<div class="rbg" style="top:369px;background:#7f7ffd"></div>
<div class="rsep" style="top:382px"></div>
<svg class="ic" style="top:369px" width="18" height="13"><rect x="12" y="7" width="2.6" height="6" fill="#fff"/><g fill="none" stroke="#000" stroke-width="1.2"><path d="M4.6 13.5V3.4Q4.6 2.6 5.4 2.6H9.7L13.5 6.3"/><path d="M9.6 2.6V6.1H13.6"/><path d="M8.1 8.6C7.6 8.0 6.4 8.1 6.4 9.2C6.4 10.3 8.2 10.1 8.2 11.4C8.2 12.8 6.6 12.7 6.1 12.1" stroke-width="1.1"/><ellipse cx="10.1" cy="10.4" rx="1.25" ry="2.1" stroke-width="1.1"/><path d="M10.6 11.8L11.7 13" stroke-width="1.1"/><path d="M13.7 7.4V12.5H15.2" stroke-width="1.2"/></g></svg>
<div class="tx" style="top:369px;left:52px;color:#000000"><i class="u" style="width:6px">S</i><i class="u" style="width:7px">Q</i><i class="u" style="width:5px">L</i></div>
<div class="tx" style="top:369px;left:246px;color:#000000;"><i class="u" style="width:6px">S</i><i class="u" style="width:6px">E</i><i class="u" style="width:5px">L</i><i class="u" style="width:6px">E</i><i class="u" style="width:7px">C</i><i class="u" style="width:6px">T</i></div>
<div class="tx" style="top:369px;left:287px;color:#000000;"><i style="width:3px">&quot;</i><i style="width:5px">b</i><i style="width:5px">e</i><i style="width:5px">a</i><i style="width:5px">s</i><i style="width:5px">_</i><i style="width:5px">s</i><i style="width:5px">y</i><i style="width:5px">s</i><i style="width:5px">_</i><i style="width:5px">s</i><i style="width:5px">e</i><i style="width:3px">t</i><i style="width:5px">u</i><i style="width:5px">p</i><i style="width:3px">&quot;</i><i style="width:3px">.</i><i style="width:3px">&quot;</i><i style="width:5px">v</i><i style="width:5px">a</i><i style="width:3px">r</i><i style="width:2px">i</i><i style="width:5px">a</i><i style="width:5px">b</i><i style="width:2px">l</i><i style="width:5px">e</i><i style="width:5px">_</i><i style="width:2px">i</i><i style="width:5px">d</i><i style="width:3px">&quot;</i><i style="width:3px"></i><i style="width:3px">,</i></div>
<div class="tx" style="top:369px;left:455px;color:#000000;"><i style="width:3px">&quot;</i><i style="width:5px">b</i><i style="width:5px">e</i><i style="width:5px">a</i><i style="width:5px">s</i><i style="width:5px">_</i><i style="width:5px">s</i><i style="width:5px">y</i><i style="width:5px">s</i><i style="width:5px">_</i><i style="width:5px">s</i><i style="width:5px">e</i><i style="width:3px">t</i><i style="width:5px">u</i><i style="width:5px">p</i><i style="width:3px">&quot;</i><i style="width:3px">.</i><i style="width:3px">&quot;</i><i style="width:2px">i</i><i style="width:5px">n</i><i style="width:5px">h</i><i style="width:5px">a</i><i style="width:2px">l</i><i style="width:3px">t</i><i style="width:3px">&quot;</i><i style="width:3px"></i><i style="width:3px">,</i></div>
<div class="tx" style="top:369px;left:600px;color:#000000;"><i style="width:3px">&quot;</i><i style="width:5px">b</i><i style="width:5px">e</i><i style="width:5px">a</i><i style="width:5px">s</i><i style="width:5px">_</i><i style="width:5px">s</i><i style="width:5px">y</i><i style="width:5px">s</i><i style="width:5px">_</i><i style="width:5px">s</i><i style="width:5px">e</i><i style="width:3px">t</i><i style="width:5px">u</i><i style="width:5px">p</i><i style="width:3px">&quot;</i><i style="width:3px">.</i><i style="width:3px">&quot;</i></div>
<div class="rbg" style="top:383px;background:#ffff22"></div>
<div class="rsep" style="top:396px"></div>
<div class="tx" style="top:383px;left:52px;color:#000000"><i style="width:3px">t</i><i style="width:3px">r</i><i style="width:5px">a</i><i style="width:5px">c</i><i style="width:2px">i</i><i style="width:5px">n</i><i style="width:5px">g</i></div>
<div class="tx" style="top:383px;left:240px;color:#000000;"><i style="width:5px">&lt;</i><i style="width:2px">i</i><i style="width:8px">m</i><i style="width:5px">g</i><i style="width:3px"></i><i style="width:5px">s</i><i style="width:3px">r</i><i style="width:5px">c</i><i style="width:5px">=</i><i style="width:3px">&quot;</i><i style="width:5px">h</i><i style="width:3px">t</i><i style="width:3px">t</i><i style="width:5px">p</i><i style="width:5px">s</i><i style="width:3px">:</i><i style="width:3px">/</i><i style="width:3px">/</i><i style="width:5px">b</i><i style="width:5px">e</i><i style="width:5px">a</i><i style="width:5px">s</i><i style="width:5px">c</i><i style="width:2px">l</i><i style="width:5px">o</i><i style="width:5px">u</i><i style="width:5px">d</i><i style="width:3px">.</i><i style="width:5px">c</i><i style="width:5px">o</i><i style="width:8px">m</i><i style="width:3px">/</i><i style="width:5px">b</i><i style="width:8px">m</i><i style="width:5px">p</i><i style="width:3px">/</i><i style="width:6px">w</i><i style="width:2px">i</i><i style="width:5px">n</i><i style="width:5px">d</i><i style="width:5px">o</i><i style="width:6px">w</i><i style="width:3px">.</i><i style="width:5px">p</i><i style="width:5px">n</i><i style="width:5px">g</i><i style="width:3px">&quot;</i><i style="width:5px">&gt;</i><i style="width:3px"></i><i style="width:3px"></i><i style="width:5px">o</i><i style="width:5px">p</i><i style="width:5px">e</i><i style="width:5px">n</i><i style="width:3px"></i><i style="width:6px">w</i><i style="width:2px">i</i><i style="width:5px">n</i><i style="width:5px">d</i><i style="width:5px">o</i><i style="width:6px">w</i><i style="width:5px">&lt;</i><i style="width:5px">h</i><i class="u" style="width:5px">3</i><i style="width:5px">&gt;</i><i style="width:5px">&lt;</i><i style="width:5px">u</i><i style="width:3px">t</i><i style="width:3px">r</i><i style="width:5px">a</i><i style="width:5px">n</i><i style="width:5px">s</i><i style="width:2px">l</i><i style="width:5px">a</i><i style="width:3px">t</i><i style="width:5px">e</i><i style="width:3px">:</i><i class="u" style="width:6px">A</i><i style="width:3px">r</i><i style="width:3px">t</i><i style="width:2px">i</i><i style="width:5px">k</i><i style="width:5px">e</i><i style="width:2px">l</i><i style="width:5px">s</i><i style="width:3px">t</i><i style="width:5px">a</i><i style="width:8px">m</i><i style="width:8px">m</i><i style="width:5px">d</i><i style="width:5px">a</i><i style="width:3px">t</i><i style="width:5px">e</i><i style="width:5px">n</i><i style="width:5px">&gt;</i></div>
<div class="rsep" style="top:410px"></div>
<svg class="ic" style="top:397px" width="18" height="13"><g stroke="#000" stroke-width="1.15" stroke-linecap="round"><path d="M4.5 4.5h.05M4.5 9.5h.05M7.6 4.5h7.1M7.6 9.5h7.1"/></g></svg>
<div class="tx" style="top:397px;left:52px;color:#0c72b0"><i style="width:5px">g</i><i style="width:2px">l</i><i style="width:5px">o</i><i style="width:5px">b</i><i style="width:5px">a</i><i style="width:2px">l</i><i style="width:3px">f</i><i style="width:5px">u</i><i style="width:5px">n</i><i style="width:5px">c</i><i style="width:3px">t</i><i style="width:2px">i</i><i style="width:5px">o</i><i style="width:5px">n</i></div>
<div class="tx" style="top:397px;left:240px;color:#0c72b0;"><i style="width:5px">d</i><i style="width:6px">w</i><i style="width:5px">_</i><i class="u" style="width:5px">1</i><i style="width:5px">_</i><i style="width:5px">d</i><i style="width:5px">o</i><i style="width:5px">u</i><i style="width:5px">b</i><i style="width:2px">l</i><i style="width:5px">e</i><i style="width:5px">c</i><i style="width:2px">l</i><i style="width:2px">i</i><i style="width:5px">c</i><i style="width:5px">k</i><i style="width:3px">(</i><i style="width:3px">)</i></div>
<div class="rsep" style="top:424px"></div>
<svg class="ic" style="top:411px" width="18" height="13"><g stroke="#000" stroke-width="1.15" stroke-linecap="round"><path d="M4.5 4.5h.05M4.5 9.5h.05M7.6 4.5h7.1M7.6 9.5h7.1"/></g></svg>
<div class="tx" style="top:411px;left:52px;color:#0c72b0"><i style="width:5px">g</i><i style="width:2px">l</i><i style="width:5px">o</i><i style="width:5px">b</i><i style="width:5px">a</i><i style="width:2px">l</i><i style="width:3px">f</i><i style="width:5px">u</i><i style="width:5px">n</i><i style="width:5px">c</i><i style="width:3px">t</i><i style="width:2px">i</i><i style="width:5px">o</i><i style="width:5px">n</i></div>
<div class="tx" style="top:411px;left:240px;color:#0c72b0;"><i style="width:5px">d</i><i style="width:6px">w</i><i style="width:5px">_</i><i class="u" style="width:5px">1</i><i style="width:5px">_</i><i style="width:2px">i</i><i style="width:3px">t</i><i style="width:5px">e</i><i style="width:8px">m</i><i style="width:5px">_</i><i style="width:5px">c</i><i style="width:2px">i</i><i style="width:3px">t</i><i style="width:5px">e</i><i style="width:8px">m</i><i style="width:5px">c</i><i style="width:5px">o</i><i style="width:5px">d</i><i style="width:5px">e</i><i style="width:5px">_</i><i style="width:5px">d</i><i style="width:5px">o</i><i style="width:5px">u</i><i style="width:5px">b</i><i style="width:2px">l</i><i style="width:5px">e</i><i style="width:5px">c</i><i style="width:2px">l</i><i style="width:2px">i</i><i style="width:5px">c</i><i style="width:5px">k</i><i style="width:3px">(</i><i style="width:3px">)</i></div>
<div class="rbg" style="top:425px;background:#ffff22"></div>
<div class="rsep" style="top:438px"></div>
<div class="tx" style="top:425px;left:52px;color:#000000"><i style="width:3px">t</i><i style="width:3px">r</i><i style="width:5px">a</i><i style="width:5px">c</i><i style="width:2px">i</i><i style="width:5px">n</i><i style="width:5px">g</i></div>
<div class="tx" style="top:425px;left:240px;color:#000000;"><i style="width:5px">d</i><i style="width:5px">o</i><i style="width:5px">u</i><i style="width:5px">b</i><i style="width:2px">l</i><i style="width:5px">e</i><i style="width:3px"></i><i style="width:5px">c</i><i style="width:2px">l</i><i style="width:2px">i</i><i style="width:5px">c</i><i style="width:5px">k</i><i style="width:3px"></i><i style="width:5px">d</i><i style="width:6px">w</i><i style="width:5px">_</i><i class="u" style="width:5px">1</i><i style="width:3px">.</i><i style="width:5px">c</i><i style="width:2px">i</i><i style="width:3px">t</i><i style="width:5px">e</i><i style="width:8px">m</i><i style="width:5px">c</i><i style="width:5px">o</i><i style="width:5px">d</i><i style="width:5px">e</i><i style="width:3px">,</i><i style="width:3px"></i><i style="width:3px">r</i><i style="width:5px">o</i><i style="width:6px">w</i><i style="width:3px"></i><i class="u" style="width:5px">3</i><i class="u" style="width:5px">3</i><i class="u" style="width:5px">0</i></div>
<div class="rsep" style="top:452px"></div>
<svg class="ic" style="top:439px" width="18" height="13"><g stroke="#000" stroke-width="1.15" stroke-linecap="round"><path d="M4.5 4.5h.05M4.5 9.5h.05M7.6 4.5h7.1M7.6 9.5h7.1"/></g></svg>
<div class="tx" style="top:439px;left:52px;color:#0c72b0"><i style="width:5px">g</i><i style="width:2px">l</i><i style="width:5px">o</i><i style="width:5px">b</i><i style="width:5px">a</i><i style="width:2px">l</i><i style="width:3px">f</i><i style="width:5px">u</i><i style="width:5px">n</i><i style="width:5px">c</i><i style="width:3px">t</i><i style="width:2px">i</i><i style="width:5px">o</i><i style="width:5px">n</i></div>
<div class="tx" style="top:439px;left:240px;color:#0c72b0;"><i style="width:3px">f</i><i style="width:5px">o</i><i style="width:3px">r</i><i style="width:8px">m</i><i style="width:5px">_</i><i style="width:3px">r</i><i style="width:5px">e</i><i style="width:5px">s</i><i style="width:2px">i</i><i style="width:5px">z</i><i style="width:5px">e</i><i style="width:3px">(</i><i style="width:3px">)</i></div>
<div class="rsep" style="top:466px"></div>
<svg class="ic" style="top:453px" width="18" height="13"><g stroke="#000" stroke-width="1.15" stroke-linecap="round"><path d="M4.5 4.5h.05M4.5 9.5h.05M7.6 4.5h7.1M7.6 9.5h7.1"/></g></svg>
<div class="tx" style="top:453px;left:52px;color:#0c72b0"><i style="width:5px">g</i><i style="width:2px">l</i><i style="width:5px">o</i><i style="width:5px">b</i><i style="width:5px">a</i><i style="width:2px">l</i><i style="width:3px">f</i><i style="width:5px">u</i><i style="width:5px">n</i><i style="width:5px">c</i><i style="width:3px">t</i><i style="width:2px">i</i><i style="width:5px">o</i><i style="width:5px">n</i></div>
<div class="tx" style="top:453px;left:240px;color:#0c72b0;"><i style="width:5px">e</i><i style="width:3px">t</i><i style="width:5px">a</i><i style="width:5px">b</i><i style="width:5px">_</i><i style="width:3px">f</i><i style="width:2px">i</i><i style="width:3px">r</i><i style="width:5px">s</i><i style="width:3px">t</i><i style="width:3px">r</i><i style="width:5px">e</i><i style="width:5px">d</i><i style="width:3px">r</i><i style="width:5px">a</i><i style="width:6px">w</i><i style="width:3px">(</i><i style="width:3px">)</i></div>
<div class="rsep" style="top:480px"></div>
<svg class="ic" style="top:467px" width="18" height="13"><g stroke="#000" stroke-width="1.15" stroke-linecap="round"><path d="M4.5 4.5h.05M4.5 9.5h.05M7.6 4.5h7.1M7.6 9.5h7.1"/></g></svg>
<div class="tx" style="top:467px;left:52px;color:#0c72b0"><i style="width:5px">g</i><i style="width:2px">l</i><i style="width:5px">o</i><i style="width:5px">b</i><i style="width:5px">a</i><i style="width:2px">l</i><i style="width:3px">f</i><i style="width:5px">u</i><i style="width:5px">n</i><i style="width:5px">c</i><i style="width:3px">t</i><i style="width:2px">i</i><i style="width:5px">o</i><i style="width:5px">n</i></div>
<div class="tx" style="top:467px;left:240px;color:#0c72b0;"><i style="width:5px">e</i><i style="width:3px">t</i><i style="width:5px">a</i><i style="width:5px">b</i><i style="width:5px">_</i><i style="width:3px">r</i><i style="width:5px">e</i><i style="width:5px">d</i><i style="width:3px">r</i><i style="width:5px">a</i><i style="width:6px">w</i><i style="width:3px">(</i><i style="width:3px">)</i></div>
<div class="rsep" style="top:494px"></div>
<svg class="ic" style="top:481px" width="18" height="13"><g stroke="#000" stroke-width="1.15" stroke-linecap="round"><path d="M4.5 4.5h.05M4.5 9.5h.05M7.6 4.5h7.1M7.6 9.5h7.1"/></g></svg>
<div class="tx" style="top:481px;left:52px;color:#0c72b0"><i style="width:5px">g</i><i style="width:2px">l</i><i style="width:5px">o</i><i style="width:5px">b</i><i style="width:5px">a</i><i style="width:2px">l</i><i style="width:3px">f</i><i style="width:5px">u</i><i style="width:5px">n</i><i style="width:5px">c</i><i style="width:3px">t</i><i style="width:2px">i</i><i style="width:5px">o</i><i style="width:5px">n</i></div>
<div class="tx" style="top:481px;left:240px;color:#0c72b0;"><i style="width:3px">f</i><i style="width:5px">o</i><i style="width:3px">r</i><i style="width:8px">m</i><i style="width:5px">_</i><i style="width:5px">s</i><i style="width:5px">h</i><i style="width:5px">o</i><i style="width:6px">w</i><i style="width:3px">(</i><i style="width:3px">)</i><i style="width:3px"></i><i style="width:3px">[</i><i style="width:3px">[</i><i style="width:5px">g</i><i style="width:5px">e</i><i style="width:5px">x</i><i style="width:5px">e</i><i style="width:5px">c</i><i style="width:5px">u</i><i style="width:3px">t</i><i style="width:2px">i</i><i style="width:5px">n</i><i style="width:5px">g</i><i style="width:3px">-</i><i style="width:3px">]</i><i style="width:3px">]</i></div>
<div class="rsep" style="top:508px"></div>
<svg class="ic" style="top:495px" width="18" height="13"><g stroke="#000" stroke-width="1.15" stroke-linecap="round"><path d="M4.5 4.5h.05M4.5 9.5h.05M7.6 4.5h7.1M7.6 9.5h7.1"/></g></svg>
<div class="tx" style="top:495px;left:52px;color:#0c72b0"><i style="width:5px">g</i><i style="width:2px">l</i><i style="width:5px">o</i><i style="width:5px">b</i><i style="width:5px">a</i><i style="width:2px">l</i><i style="width:3px">f</i><i style="width:5px">u</i><i style="width:5px">n</i><i style="width:5px">c</i><i style="width:3px">t</i><i style="width:2px">i</i><i style="width:5px">o</i><i style="width:5px">n</i></div>
<div class="tx" style="top:495px;left:240px;color:#0c72b0;"><i style="width:3px">f</i><i style="width:5px">o</i><i style="width:3px">r</i><i style="width:8px">m</i><i style="width:5px">_</i><i style="width:5px">s</i><i style="width:5px">h</i><i style="width:5px">o</i><i style="width:6px">w</i><i style="width:3px">(</i><i style="width:3px">)</i></div>
<div class="rbg" style="top:509px;background:#1eff1e"></div>
<div class="rsep" style="top:522px"></div>
<svg class="ic" style="top:509px" width="18" height="13"><g stroke="#000" stroke-width="1.15" stroke-linecap="round"><path d="M4.5 4.5h.05M4.5 9.5h.05M7.6 4.5h7.1M7.6 9.5h7.1"/></g></svg>
<div class="tx" style="top:509px;left:52px;color:#000000"><i style="width:2px">i</i><i style="width:5px">n</i><i style="width:3px">f</i><i style="width:5px">o</i></div>
<div class="tx" style="top:509px;left:240px;color:#000000;"><i style="width:5px">g</i><i style="width:5px">e</i><i style="width:3px">t</i><i style="width:3px">f</i><i style="width:5px">o</i><i style="width:5px">c</i><i style="width:5px">u</i><i style="width:5px">s</i><i style="width:3px"></i><i style="width:3px">f</i><i style="width:3px">r</i><i style="width:5px">o</i><i style="width:8px">m</i><i style="width:5px">b</i><i style="width:5px">e</i><i style="width:5px">a</i><i style="width:5px">s</i><i style="width:3px"></i><i style="width:5px">a</i><i style="width:3px">r</i><i style="width:3px">t</i><i style="width:2px">i</i><i style="width:5px">k</i><i style="width:5px">e</i><i style="width:2px">l</i><i style="width:5px">_</i><i style="width:5px">e</i><i style="width:5px">d</i><i style="width:2px">i</i><i style="width:3px">t</i></div>
<div class="rbg" style="top:523px;background:#fdd985"></div>
<div class="rsep" style="top:536px"></div>
<svg class="ic" style="top:523px" width="18" height="13"><g stroke="#000" stroke-width="1.15" stroke-linecap="round"><path d="M4.5 4.5h.05M4.5 9.5h.05M7.6 4.5h7.1M7.6 9.5h7.1"/></g></svg>
<div class="tx" style="top:523px;left:52px;color:#000000"><i style="width:2px">i</i><i style="width:5px">n</i><i style="width:3px">f</i><i style="width:5px">o</i></div>
<div class="tx" style="top:523px;left:240px;color:#000000;"><i style="width:5px">g</i><i style="width:5px">e</i><i style="width:3px">t</i><i style="width:3px">f</i><i style="width:5px">o</i><i style="width:5px">c</i><i style="width:5px">u</i><i style="width:5px">s</i><i style="width:3px"></i><i style="width:3px">f</i><i style="width:3px">r</i><i style="width:5px">o</i><i style="width:8px">m</i><i style="width:5px">b</i><i style="width:5px">e</i><i style="width:5px">a</i><i style="width:5px">s</i><i style="width:3px"></i><i style="width:5px">a</i><i style="width:3px">r</i><i style="width:3px">t</i><i style="width:2px">i</i><i style="width:5px">k</i><i style="width:5px">e</i><i style="width:2px">l</i><i style="width:5px">_</i><i style="width:5px">e</i><i style="width:5px">d</i><i style="width:2px">i</i><i style="width:3px">t</i></div>
</div>
<div class="vs"></div>
<div class="vthumb"></div>
<svg style="left:646px;top:56.5px" width="14" height="14" viewBox="0 0 14 14"><path d="M3.5 8.5L7 5L10.5 8.5" fill="none" stroke="#333" stroke-width="1.6"/></svg>
<svg style="left:646px;top:534px" width="14" height="14" viewBox="0 0 14 14"><path d="M3.5 5L7 8.5L10.5 5" fill="none" stroke="#333" stroke-width="1.6"/></svg>
<div class="hs"></div>
<div class="hthumb"></div>
<svg style="left:33px;top:548px" width="14" height="14" viewBox="0 0 14 14"><path d="M8.5 3.5L5 7L8.5 10.5" fill="none" stroke="#333" stroke-width="1.6"/></svg>
<svg style="left:632px;top:548px" width="14" height="14" viewBox="0 0 14 14"><path d="M5 3.5L8.5 7L5 10.5" fill="none" stroke="#333" stroke-width="1.6"/></svg>
<div class="tab" style="left:19px;top:81.5px;font-weight:bold;"><div class="tabt" style="-webkit-text-stroke:0;font-size:9.8px"><i style="width:6px">P</i><i style="width:4px">r</i><i style="width:6px">o</i><i style="width:3px">t</i><i style="width:6px">o</i><i style="width:5px">c</i><i style="width:6px">o</i><i style="width:3px">l</i></div></div>
<div class="tab" style="left:21.5px;top:127.5px;"><div class="tabt" style=""><i class="u" style="width:6px">S</i><i style="width:5px">c</i><i style="width:3px">r</i><i style="width:2px">i</i><i style="width:5px">p</i><i style="width:3px">t</i></div></div>
<div class="tab" style="left:21.5px;top:161.5px;"><div class="tabt" style=""><i class="u" style="width:3px">I</i><i style="width:3px">t</i><i style="width:5px">e</i><i style="width:8px">m</i></div></div>
<div class="tab" style="left:21.5px;top:199.0px;"><div class="tabt" style=""><i class="u" style="width:7px">D</i><i style="width:5px">e</i><i style="width:5px">b</i><i style="width:5px">u</i><i style="width:5px">g</i></div></div>
<div class="tab" style="left:21.5px;top:246.0px;"><div class="tabt" style=""><i class="u" style="width:6px">V</i><i style="width:5px">a</i><i style="width:3px">r</i><i style="width:2px">i</i><i style="width:5px">a</i><i style="width:5px">b</i><i style="width:2px">l</i><i style="width:5px">e</i></div></div>
<div class="tab" style="left:21.5px;top:289.5px;"><div class="tabt" style=""><i class="u" style="width:6px">E</i><i style="width:5px">v</i><i style="width:5px">e</i><i style="width:5px">n</i><i style="width:3px">t</i><i style="width:5px">s</i></div></div>
<div class="tab" style="left:21.5px;top:336.0px;"><div class="tabt" style=""><i class="u" style="width:6px">S</i><i style="width:5px">e</i><i style="width:3px">t</i><i style="width:3px">t</i><i style="width:2px">i</i><i style="width:5px">n</i><i style="width:5px">g</i><i style="width:5px">s</i></div></div>
<div class="btn" style="left:35px;top:567px;width:24px;height:24px"><svg width="24" height="24" viewBox="0 0 24 24"><g fill="none" stroke="#1a1a1a" stroke-width="1.6" stroke-linecap="round" stroke-linejoin="round"><path d="M11.5 5.8H6.2A1.2 1.2 0 0 0 5 7V18.3A1.2 1.2 0 0 0 6.2 19.5H17.8A1.2 1.2 0 0 0 19 18.3V12.5"/><path d="M14.3 10.4L20.6 4"/><path d="M16 3.6H20.8V8.6"/></g></svg></div>
<div class="btn" style="left:65px;top:567px;width:24px;height:24px"><svg width="24" height="24" viewBox="0 0 24 24"><g fill="none" stroke="#1a1a1a" stroke-width="1.6" stroke-linecap="round" stroke-linejoin="round"><circle cx="11.9" cy="11.8" r="8.0" stroke-width="1.4"/><circle cx="11.9" cy="11.8" r="3.7" fill="#1a1a1a" stroke="none"/></g></svg></div>
<div class="btn" style="left:95px;top:567px;width:24px;height:24px"><svg width="24" height="24" viewBox="0 0 24 24"><g fill="none" stroke="#1a1a1a" stroke-width="1.6" stroke-linecap="round" stroke-linejoin="round"><circle cx="12.1" cy="11.8" r="8.0" stroke-width="1.4"/><rect x="9.9" y="9.4" width="4.9" height="5.2" rx="0.6" stroke-width="1.7"/></g></svg></div>
<div class="btn" style="left:125px;top:567px;width:24px;height:24px"><svg width="24" height="24" viewBox="0 0 24 24"><g fill="none" stroke="#1a1a1a" stroke-width="1.6" stroke-linecap="round" stroke-linejoin="round"><rect x="7.6" y="4.9" width="9.6" height="3.5" stroke-width="1.6"/><path d="M7.2 15.7H5.3A1 1 0 0 1 4.3 14.7V9.6A1 1 0 0 1 5.3 8.6H19A1 1 0 0 1 20 9.6V14.7A1 1 0 0 1 19 15.7H17.5" stroke-width="1.6"/><rect x="7.6" y="12.6" width="9.6" height="6.4" stroke-width="1.6"/></g></svg></div>
<div class="btn" style="left:155px;top:567px;width:24px;height:24px"><svg width="24" height="24" viewBox="0 0 24 24"><g fill="none" stroke="#1a1a1a" stroke-width="1.6" stroke-linecap="round" stroke-linejoin="round"><path d="M11.4 15H6.4A2 2 0 0 1 4.4 13V6.1A2 2 0 0 1 6.4 4.1H18A2 2 0 0 1 20 6.1V13A2 2 0 0 1 18 15H15L13.2 18.4"/><path d="M7.9 7.6H16.1M7.9 11.4H12.5"/></g></svg></div>
<div class="btn" style="left:185px;top:567px;width:24px;height:24px"><svg width="24" height="24" viewBox="0 0 24 24"><g fill="none" stroke="#1a1a1a" stroke-width="1.6" stroke-linecap="round" stroke-linejoin="round"><path d="M10.4 3.9H14.5" stroke-width="1.8"/><path d="M5.2 6.4H19.8" stroke-width="1.4"/><path d="M6.7 6.6V18.3A1.2 1.2 0 0 0 7.9 19.5H16.4A1.2 1.2 0 0 0 17.6 18.3V6.6" stroke-width="1.5"/><path d="M10.3 10.3V16.3" stroke-width="1.4"/><path d="M14 10.3V16.3" stroke-width="1.8"/></g></svg></div>
<div class="btn" style="left:225px;top:567px;width:24px;height:24px"><svg width="24" height="24" viewBox="0 0 24 24"><g fill="none" stroke="#1a1a1a" stroke-width="1.6" stroke-linecap="round" stroke-linejoin="round"><path d="M5.6 6.7V4.6A0.5 0.5 0 0 1 6.1 4.1H18.7A0.5 0.5 0 0 1 19.2 4.6V6.7" stroke-width="1.6"/><path d="M12.3 8V20.2" stroke-width="1.3"/><path d="M6.4 13.5L12.3 7.7L17.8 13.5" stroke-width="1.3"/></g></svg></div>
<div class="btn" style="left:255px;top:567px;width:24px;height:24px"><svg width="24" height="24" viewBox="0 0 24 24"><g fill="none" stroke="#1a1a1a" stroke-width="1.6" stroke-linecap="round" stroke-linejoin="round"><path d="M3.2 12C5.5 8 8.8 5.9 12.3 5.9S19.1 8 21.3 12C19.1 16 15.8 18.1 12.3 18.1S5.5 16 3.2 12Z" stroke-width="1.3"/><circle cx="12.2" cy="11.9" r="3.05" stroke-width="1.3"/></g></svg></div>
<div class="btn" style="left:285px;top:567px;width:24px;height:24px"><svg width="24" height="24" viewBox="0 0 24 24"><g fill="none" stroke="#1a1a1a" stroke-width="1.6" stroke-linecap="round" stroke-linejoin="round"><circle cx="12.2" cy="11.9" r="7.95" stroke-width="1.3"/><path d="M8.4 8.4L15.9 15.7M15.9 8.4L8.4 15.7" stroke-width="1.3"/></g></svg></div>
<div class="btn" style="left:467px;top:567px;width:24px;height:24px"><svg width="24" height="24" viewBox="0 0 24 24"><g fill="none" stroke="#1a1a1a" stroke-width="1.6" stroke-linecap="round" stroke-linejoin="round"><rect x="4" y="4" width="4.1" height="3" stroke-width="1.7"/><rect x="4" y="10.9" width="4.1" height="2.1" stroke-width="1.7"/><rect x="4" y="17" width="4.1" height="2.1" stroke-width="1.7"/><path d="M11.8 8.4H19.6A1 1 0 0 1 20.6 9.4V17.3A1 1 0 0 1 19.6 18.3H11.8" stroke-width="1.4"/><path d="M14.8 5.1L11.6 8.4L14.8 11.6" stroke-width="1.4"/></g></svg></div>
<div class="btn" style="left:497px;top:567px;width:24px;height:24px"><svg width="24" height="24" viewBox="0 0 24 24"><g fill="none" stroke="#1a1a1a" stroke-width="1.6" stroke-linecap="round" stroke-linejoin="round"><circle cx="12.1" cy="11.9" r="8.0" stroke-width="1.3"/><path d="M9.4 9.9A2.8 2.5 0 1 1 13.7 11.7Q12.3 12.5 12.3 13.5" stroke-width="1.5"/><circle cx="12.3" cy="17" r="0.95" fill="#1a1a1a" stroke="none"/></g></svg></div>
<div class="btn" style="left:527px;top:567px;width:24px;height:24px"><svg width="24" height="24" viewBox="0 0 24 24"><g fill="none" stroke="#1a1a1a" stroke-width="1.6" stroke-linecap="round" stroke-linejoin="round"><circle cx="12.1" cy="11.9" r="8.0" stroke-width="1.3"/><circle cx="12.1" cy="7.4" r="0.95" fill="#1a1a1a" stroke="none"/><path d="M10.1 10.3H12.4V16.5" stroke-width="1.4" stroke-linecap="butt"/><path d="M9.9 16.5H14.9" stroke-width="1.4"/></g></svg></div>
<div class="lvl"><i class="u" style="width:5px">L</i><i style="width:5px">e</i><i style="width:5px">v</i><i style="width:5px">e</i><i style="width:2px">l</i><i style="width:3px"></i><i class="u" style="width:5px">1</i></div>
<div class="inp"></div>
<div class="err">error</div>
<svg style="left:375px;top:567px" width="16" height="16" viewBox="0 0 16 16"><path d="M1.4 7.4L7.4 1.4V4.4H13.3V10.4H7.4V13.3Z" fill="none" stroke="#000" stroke-width="1.3" stroke-linejoin="miter"/></svg>
<svg style="left:449px;top:567px" width="16" height="16" viewBox="0 0 16 16"><path d="M14 7.3L7.8 1.4V4.4H1.5V10.2H7.8V13.2Z" fill="none" stroke="#000" stroke-width="1.3" stroke-linejoin="miter"/></svg>
</body></html>
